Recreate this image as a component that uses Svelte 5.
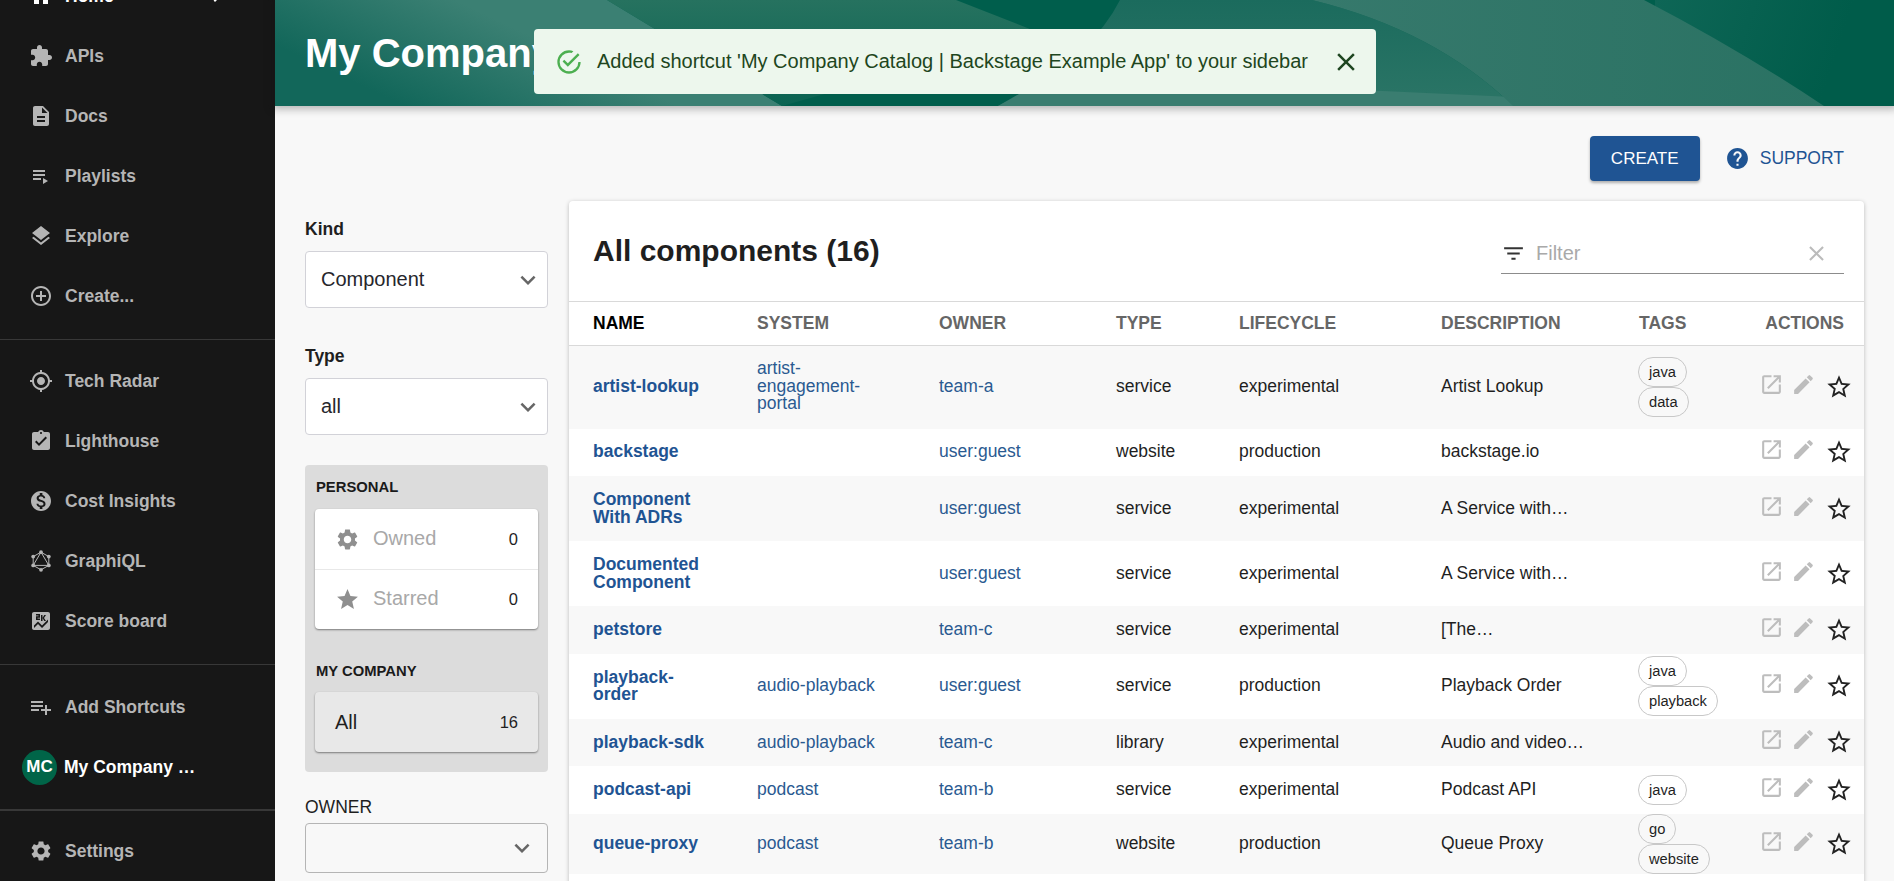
<script>
	const icons = {
		home: 'M10 20v-6h4v6h5v-8h3L12 3 2 12h3v8z',
		chevronRight: 'M10 6 8.59 7.41 13.17 12l-4.58 4.59L10 18l6-6z',
		extension: 'M20.5 11H19V7c0-1.1-.9-2-2-2h-4V3.5C13 2.12 11.88 1 10.5 1S8 2.12 8 3.5V5H4c-1.1 0-1.99.9-1.99 2v3.8H3.5c1.49 0 2.7 1.21 2.7 2.7s-1.21 2.7-2.7 2.7H2V20c0 1.1.9 2 2 2h3.8v-1.5c0-1.49 1.21-2.7 2.7-2.7 1.49 0 2.7 1.21 2.7 2.7V22H17c1.1 0 2-.9 2-2v-4h1.5c1.38 0 2.5-1.12 2.5-2.5S21.88 11 20.5 11z',
		description: 'M14 2H6c-1.1 0-1.99.9-1.99 2L4 20c0 1.1.89 2 1.99 2H18c1.1 0 2-.9 2-2V8l-6-6zm2 16H8v-2h8v2zm0-4H8v-2h8v2zm-3-5V3.5L18.5 9H13z',
		playlist: 'M4 10h12v2H4zm0-4h12v2H4zm0 8h8v2H4zm10 0v6l5-3z',
		layers: 'M11.99 18.54l-7.37-5.73L3 14.07l9 7 9-7-1.63-1.27-7.38 5.74zM12 16l7.36-5.73L21 9l-9-7-9 7 1.63 1.27L12 16z',
		addCircle: 'M13 7h-2v4H7v2h4v4h2v-4h4v-2h-4V7zm-1-5C6.48 2 2 6.48 2 12s4.48 10 10 10 10-4.48 10-10S17.52 2 12 2zm0 18c-4.41 0-8-3.59-8-8s3.59-8 8-8 8 3.59 8 8-3.59 8-8 8z',
		radar: 'M12 8c-2.21 0-4 1.79-4 4s1.79 4 4 4 4-1.79 4-4-1.79-4-4-4zm8.94 3c-.46-4.17-3.77-7.48-7.94-7.94V1h-2v2.06C6.83 3.52 3.52 6.83 3.06 11H1v2h2.06c.46 4.17 3.77 7.48 7.94 7.94V23h2v-2.06c4.17-.46 7.48-3.77 7.94-7.94H23v-2h-2.06zM12 19c-3.87 0-7-3.13-7-7s3.13-7 7-7 7 3.13 7 7-3.13 7-7 7z',
		assignment: 'M19 3h-4.18C14.4 1.84 13.3 1 12 1c-1.3 0-2.4.84-2.82 2H5c-1.1 0-2 .9-2 2v14c0 1.1.9 2 2 2h14c1.1 0 2-.9 2-2V5c0-1.1-.9-2-2-2zm-7 0c.55 0 1 .45 1 1s-.45 1-1 1-1-.45-1-1 .45-1 1-1zm-2 14l-4-4 1.41-1.41L10 14.17l6.59-6.59L18 9l-8 8z',
		money: 'M12 2C6.48 2 2 6.48 2 12s4.48 10 10 10 10-4.48 10-10S17.52 2 12 2zm1.41 16.09V20h-2.67v-1.93c-1.71-.36-3.16-1.46-3.27-3.4h1.96c.1 1.05.82 1.87 2.65 1.87 1.96 0 2.4-.98 2.4-1.59 0-.83-.44-1.61-2.67-2.14-2.48-.6-4.18-1.62-4.18-3.67 0-1.72 1.39-2.84 3.11-3.21V4h2.67v1.95c1.86.45 2.79 1.86 2.85 3.39H14.3c-.05-1.11-.64-1.87-2.22-1.87-1.5 0-2.4.68-2.4 1.64 0 .84.65 1.39 2.67 1.91s4.18 1.39 4.18 3.91c-.01 1.83-1.38 2.83-3.12 3.16z',
		score: 'M19 3H5c-1.1 0-2 .9-2 2v14c0 1.1.9 2 2 2h14c1.1 0 2-.9 2-2V5c0-1.1-.9-2-2-2zM12 6h1.5v3l1.75-3H17l-2 3 2 3h-1.75l-1.75-3v3H12V6zM7 7.25h2.5V6.5H7V5h4v3.75H8.5v.75H11V11H7V7.25zM19 13l-6 6-4-4-4 4v-2.5l4-4 4 4 6-6V13z',
		playlistAdd: 'M14 10H2v2h12v-2zm0-4H2v2h12V6zm4 8v-4h-2v4h-4v2h4v4h2v-4h4v-2h-4zM2 16h8v-2H2v2z',
		settings: 'M19.14 12.94c.04-.3.06-.61.06-.94 0-.32-.02-.64-.07-.94l2.03-1.58c.18-.14.23-.41.12-.61l-1.92-3.32c-.12-.22-.37-.29-.59-.22l-2.39.96c-.5-.38-1.03-.7-1.62-.94l-.36-2.54c-.04-.24-.24-.41-.48-.41h-3.84c-.24 0-.43.17-.47.41l-.36 2.54c-.59.24-1.13.57-1.62.94l-2.39-.96c-.22-.08-.47 0-.59.22L2.74 8.87c-.12.21-.08.47.12.61l2.03 1.58c-.05.3-.09.63-.09.94s.02.64.07.94l-2.03 1.58c-.18.14-.23.41-.12.61l1.92 3.32c.12.22.37.29.59.22l2.39-.96c.5.38 1.03.7 1.62.94l.36 2.54c.05.24.24.41.48.41h3.84c.24 0 .44-.17.47-.41l.36-2.54c.59-.24 1.13-.56 1.62-.94l2.39.96c.22.08.47 0 .59-.22l1.92-3.32c.12-.22.07-.47-.12-.61l-2.01-1.58zM12 15.6c-1.98 0-3.6-1.62-3.6-3.6s1.62-3.6 3.6-3.6 3.6 1.62 3.6 3.6-1.62 3.6-3.6 3.6z',
		star: 'M12 17.27 18.18 21l-1.64-7.03L22 9.24l-7.19-.61L12 2 9.19 8.63 2 9.24l5.46 4.73L5.82 21z',
		starBorder: 'M22 9.24l-7.19-.62L12 2 9.19 8.63 2 9.24l5.46 4.73L5.82 21 12 17.27 18.18 21l-1.63-7.03L22 9.24zM12 15.4l-3.76 2.27 1-4.28-3.32-2.88 4.38-.38L12 6.1l1.71 4.04 4.38.38-3.32 2.88 1 4.28L12 15.4z',
		open: 'M19 19H5V5h7V3H5c-1.11 0-2 .9-2 2v14c0 1.1.89 2 2 2h14c1.1 0 2-.9 2-2v-7h-2v7zM14 3v2h3.59l-9.83 9.83 1.41 1.41L19 6.41V10h2V3h-7z',
		edit: 'M3 17.25V21h3.75L17.81 9.94l-3.75-3.75L3 17.25zM20.71 7.04c.39-.39.39-1.02 0-1.41l-2.34-2.34a.9959.9959 0 0 0-1.41 0l-1.83 1.83 3.75 3.75 1.83-1.83z',
		help: 'M12 2C6.48 2 2 6.48 2 12s4.48 10 10 10 10-4.48 10-10S17.52 2 12 2zm1 17h-2v-2h2v2zm2.07-7.75l-.9.92C13.45 12.9 13 13.5 13 15h-2v-.5c0-1.1.45-2.1 1.17-2.83l1.24-1.26c.37-.36.59-.86.59-1.41 0-1.1-.9-2-2-2s-2 .9-2 2H8c0-2.21 1.79-4 4-4s4 1.79 4 4c0 .88-.36 1.68-.93 2.25z',
		filter: 'M10 18h4v-2h-4v2zM3 6v2h18V6H3zm3 7h12v-2H6v2z',
		clear: 'M19 6.41 17.59 5 12 10.59 6.41 5 5 6.41 10.59 12 5 17.59 6.41 19 12 13.41 17.59 19 19 17.59 13.41 12z',
		expand: 'M16.59 8.59 12 13.17 7.41 8.59 6 10l6 6 6-6z',
		success: 'M20 12a8 8 0 0 1-8 8 8 8 0 0 1-8-8 8 8 0 0 1 8-8c.76 0 1.5.11 2.2.31l1.57-1.57A9.9 9.9 0 0 0 12 2 10 10 0 0 0 2 12a10 10 0 0 0 10 10 10 10 0 0 0 10-10M7.91 10.08 6.5 11.5 11 16 21 6l-1.41-1.42L11 13.17l-3.09-3.09z'
	};

	const navTop = [
		{ icon: 'extension', label: 'APIs' },
		{ icon: 'description', label: 'Docs' },
		{ icon: 'playlist', label: 'Playlists' },
		{ icon: 'layers', label: 'Explore' },
		{ icon: 'addCircle', label: 'Create...' }
	];
	const navMid = [
		{ icon: 'radar', label: 'Tech Radar' },
		{ icon: 'assignment', label: 'Lighthouse' },
		{ icon: 'money', label: 'Cost Insights' },
		{ icon: 'graphiql', label: 'GraphiQL' },
		{ icon: 'score', label: 'Score board' }
	];

	const columns = ['Name', 'System', 'Owner', 'Type', 'Lifecycle', 'Description', 'Tags'];

	const rows = [
		{ name: 'artist-lookup', system: 'artist-engagement-portal', owner: 'team-a', type: 'service', lifecycle: 'experimental', description: 'Artist Lookup', tags: ['java', 'data'] },
		{ name: 'backstage', system: '', owner: 'user:guest', type: 'website', lifecycle: 'production', description: 'backstage.io', tags: [] },
		{ name: 'Component With ADRs', system: '', owner: 'user:guest', type: 'service', lifecycle: 'experimental', description: 'A Service with…', tags: [] },
		{ name: 'Documented Component', system: '', owner: 'user:guest', type: 'service', lifecycle: 'experimental', description: 'A Service with…', tags: [] },
		{ name: 'petstore', system: '', owner: 'team-c', type: 'service', lifecycle: 'experimental', description: '[The…', tags: [] },
		{ name: 'playback-order', system: 'audio-playback', owner: 'user:guest', type: 'service', lifecycle: 'production', description: 'Playback Order', tags: ['java', 'playback'] },
		{ name: 'playback-sdk', system: 'audio-playback', owner: 'team-c', type: 'library', lifecycle: 'experimental', description: 'Audio and video…', tags: [] },
		{ name: 'podcast-api', system: 'podcast', owner: 'team-b', type: 'service', lifecycle: 'experimental', description: 'Podcast API', tags: ['java'] },
		{ name: 'queue-proxy', system: 'podcast', owner: 'team-b', type: 'website', lifecycle: 'production', description: 'Queue Proxy', tags: ['go', 'website'] }
	];
</script>

{#snippet icon(name, cls = '')}
	{#if name === 'graphiql'}
		<svg class="icon {cls}" viewBox="0 0 24 24" aria-hidden="true">
			<polygon points="12,3.2 19.8,7.6 19.8,16.4 12,20.8 4.2,16.4 4.2,7.6" fill="none" stroke="currentColor" stroke-width="1" />
			<polygon points="12,3.2 19.8,16.4 4.2,16.4" fill="none" stroke="currentColor" stroke-width="1" />
			<circle cx="12" cy="3.2" r="1.9" />
			<circle cx="19.8" cy="7.6" r="1.9" />
			<circle cx="19.8" cy="16.4" r="1.9" />
			<circle cx="12" cy="20.8" r="1.9" />
			<circle cx="4.2" cy="16.4" r="1.9" />
			<circle cx="4.2" cy="7.6" r="1.9" />
		</svg>
	{:else}
		<svg class="icon {cls}" viewBox="0 0 24 24" aria-hidden="true"><path d={icons[name]} /></svg>
	{/if}
{/snippet}

{#snippet navItem(item)}
	<div class="nav-item">
		{@render icon(item.icon)}
		<span>{item.label}</span>
	</div>
{/snippet}

<div class="page">
	<nav class="sidebar">
		<div class="nav-group">
			<div class="nav-item home">
				{@render icon('home')}
				<span>Home</span>
				{@render icon('chevronRight', 'home-arrow')}
			</div>
			{#each navTop as item}
				{@render navItem(item)}
			{/each}
		</div>
		<hr />
		<div class="nav-group">
			{#each navMid as item}
				{@render navItem(item)}
			{/each}
		</div>
		<hr />
		<div class="nav-group shortcuts">
			{@render navItem({ icon: 'playlistAdd', label: 'Add Shortcuts' })}
			<div class="nav-item shortcut">
				<div class="avatar">MC</div>
				<span class="shortcut-label">My Company Catalog</span>
			</div>
		</div>
		<hr class="thick" />
		<div class="nav-group settings">
			{@render navItem({ icon: 'settings', label: 'Settings' })}
		</div>
	</nav>

	<main class="main">
		<header class="banner">
			<svg class="waves" viewBox="0 0 1619 106" preserveAspectRatio="none" aria-hidden="true">
				<defs>
					<linearGradient id="waveLeft" gradientUnits="userSpaceOnUse" x1="130" y1="106" x2="180" y2="0">
						<stop offset="0" stop-color="#12675a" />
						<stop offset="1" stop-color="#3b8073" />
					</linearGradient>
					<linearGradient id="waveMid" x1="0" y1="0" x2="0" y2="1">
						<stop offset="0" stop-color="#26725f" />
						<stop offset="1" stop-color="#0a6352" />
					</linearGradient>
					<linearGradient id="waveRight" x1="0" y1="0" x2="0" y2="1">
						<stop offset="0" stop-color="#1b6b5d" />
						<stop offset="1" stop-color="#2b7566" />
					</linearGradient>
					<linearGradient id="waveLight" x1="0" y1="0" x2="1" y2="0">
						<stop offset="0" stop-color="#36796c" />
						<stop offset="1" stop-color="#2a7263" />
					</linearGradient>
					<linearGradient id="waveDark" gradientUnits="userSpaceOnUse" x1="1380" y1="0" x2="1560" y2="60">
						<stop offset="0" stop-color="#0e6656" />
						<stop offset="1" stop-color="#005c4a" />
					</linearGradient>
				</defs>
				<rect width="1619" height="106" fill="url(#waveDark)" />
				<rect x="480" width="900" height="106" fill="#005e4c" />
				<path d="M0 0H332L507 106H0Z" fill="url(#waveLeft)" />
				<path d="M332 0H681L765 33L507 106Z" fill="url(#waveMid)" />
				<path d="M845 0Q815 60 723 106H1238Q1160 30 1037 0Z" fill="url(#waveRight)" />
				<path d="M723 106L744 94L1065 89L1238 97V106Z" fill="#3a7d70" />
				<path d="M1037 0Q1160 30 1238 106H1549Q1465 50 1369 0Z" fill="url(#waveLight)" />
			</svg>
			<h1>My Company Catalog</h1>
		</header>

		<div class="toast">
			{@render icon('success', 'toast-icon')}
			<span>Added shortcut 'My Company Catalog | Backstage Example App' to your sidebar</span>
			{@render icon('clear', 'toast-close')}
		</div>

		<div class="toolbar">
			<button class="create">CREATE</button>
			<div class="support">
				{@render icon('help', 'support-icon')}
				<span>SUPPORT</span>
			</div>
		</div>

		<div class="content">
			<aside class="filters">
				<div class="field-label first">Kind</div>
				<div class="select">
					<span>Component</span>
					{@render icon('expand', 'chevron')}
				</div>
				<div class="field-label">Type</div>
				<div class="select">
					<span>all</span>
					{@render icon('expand', 'chevron')}
				</div>

				<div class="picker">
					<div class="picker-title">PERSONAL</div>
					<div class="picker-card">
						<div class="picker-row muted">
							{@render icon('settings', 'picker-icon')}
							<span class="picker-name">Owned</span>
							<span class="picker-count">0</span>
						</div>
						<div class="picker-row muted">
							{@render icon('star', 'picker-icon')}
							<span class="picker-name">Starred</span>
							<span class="picker-count">0</span>
						</div>
					</div>
					<div class="picker-title second">MY COMPANY</div>
					<div class="picker-card active">
						<div class="picker-row">
							<span class="picker-name">All</span>
							<span class="picker-count">16</span>
						</div>
					</div>
				</div>

				<div class="owner-label">OWNER</div>
				<div class="select owner">
					{@render icon('expand', 'chevron')}
				</div>
			</aside>

			<section class="card">
				<div class="card-head">
					<h2>All components (16)</h2>
					<div class="search">
						{@render icon('filter', 'search-icon')}
						<span class="placeholder">Filter</span>
						{@render icon('clear', 'search-clear')}
					</div>
				</div>
				<table>
					<colgroup>
						<col style="width: 164px" />
						<col style="width: 182px" />
						<col style="width: 177px" />
						<col style="width: 123px" />
						<col style="width: 202px" />
						<col style="width: 198px" />
						<col style="width: 126px" />
						<col style="width: 123px" />
					</colgroup>
					<thead>
						<tr>
							{#each columns as col, i}
								<th class:sorted={i === 0}>{col}</th>
							{/each}
							<th class="actions-head">Actions</th>
						</tr>
					</thead>
					<tbody>
						{#each rows as row}
							<tr>
								<td class="name">{row.name}</td>
								<td class="link system">{row.system}</td>
								<td class="link">{row.owner}</td>
								<td>{row.type}</td>
								<td>{row.lifecycle}</td>
								<td>{row.description}</td>
								<td class="tags">
									{#each row.tags as tag}
										<div class="chip">{tag}</div>
									{/each}
								</td>
								<td class="actions">
									<div class="action-icons">
										{@render icon('open', 'action')}
										{@render icon('edit', 'action')}
										{@render icon('starBorder', 'action-star')}
									</div>
								</td>
							</tr>
						{/each}
						<tr class="filler"><td colspan="8"></td></tr>
					</tbody>
				</table>
			</section>
		</div>
	</main>
</div>

<style>
	:global(body) {
		margin: 0;
		background: #f8f8f8;
		font-family: "Liberation Sans", Arial, sans-serif;
	}

	.page {
		display: flex;
		position: relative;
		width: 1894px;
		height: 881px;
		overflow: hidden;
		font-size: 17.5px;
		color: #1f1f1f;
	}

	.icon {
		display: block;
		flex: none;
		width: 24px;
		height: 24px;
		fill: currentColor;
	}

	/* sidebar */
	.sidebar {
		flex: none;
		width: 275px;
		height: 881px;
		background: #171717;
		color: #b5b5b5;
		font-weight: 700;
	}

	.sidebar hr {
		margin: 0;
		border: none;
		border-top: 1px solid #383838;
	}

	.sidebar hr.thick {
		border-top-width: 2px;
	}

	.nav-group {
		margin: 11px 0 13px;
	}

	.nav-group:first-child {
		margin-top: -34px;
	}

	.nav-group.shortcuts {
		margin: 12px 0 12px;
	}

	.nav-group.settings {
		margin-top: 10px;
	}

	.nav-item {
		display: flex;
		position: relative;
		align-items: center;
		gap: 12px;
		height: 60px;
		padding-left: 29px;
	}

	.nav-item.home {
		color: #fff;
	}

	.sidebar :global(.home-arrow) {
		position: absolute;
		left: 205px;
		top: 18px;
	}

	.nav-item.shortcut {
		gap: 7px;
		padding-left: 22px;
		color: #fff;
	}

	.avatar {
		display: flex;
		flex: none;
		align-items: center;
		justify-content: center;
		width: 35px;
		height: 35px;
		border-radius: 50%;
		background: #006548;
		color: #fff;
		font-size: 17px;
	}

	.shortcut-label {
		width: 132px;
		overflow: hidden;
		white-space: nowrap;
		text-overflow: ellipsis;
	}

	/* banner */
	.main {
		flex: 1;
		min-width: 0;
	}

	.banner {
		display: flex;
		position: relative;
		align-items: center;
		height: 106px;
		padding-left: 30px;
		box-sizing: border-box;
		box-shadow: 0 0 8px 3px rgba(20, 20, 20, 0.3);
		color: #fff;
	}

	.waves {
		position: absolute;
		inset: 0;
		width: 100%;
		height: 100%;
	}

	.banner h1 {
		position: relative;
		margin: 0;
		font-size: 40px;
		line-height: 46px;
		white-space: nowrap;
	}

	.toast {
		display: flex;
		position: absolute;
		left: 534px;
		top: 29px;
		align-items: center;
		gap: 14px;
		box-sizing: border-box;
		width: 842px;
		height: 65px;
		padding: 0 15px 0 21px;
		border-radius: 4px;
		background: #edf7ed;
		color: #1e4620;
		font-size: 20px;
	}

	.toast :global(.toast-icon) {
		width: 28px;
		height: 28px;
		color: #4caf50;
	}

	.toast :global(.toast-close) {
		margin-left: auto;
		width: 30px;
		height: 30px;
		color: #1e4620;
	}

	/* toolbar */
	.toolbar {
		display: flex;
		align-items: center;
		justify-content: flex-end;
		gap: 25px;
		padding: 30px 50px 0 0;
	}

	.create {
		width: 110px;
		height: 45px;
		border: none;
		border-radius: 4px;
		background: #1f5493;
		box-shadow: 0 2px 3px rgba(0, 0, 0, 0.3);
		color: #fff;
		font: inherit;
		font-size: 17px;
	}

	.support {
		display: flex;
		align-items: center;
		gap: 10px;
		color: #1f5493;
		font-size: 17.5px;
	}

	.support :global(.support-icon) {
		width: 25px;
		height: 25px;
	}

	/* filters */
	.content {
		display: flex;
		gap: 21px;
		padding: 20px 30px 0;
	}

	.filters {
		flex: none;
		width: 243px;
		padding-top: 18px;
	}

	.field-label {
		margin: 38px 0 12px;
		font-weight: 700;
		line-height: 20px;
	}

	.field-label.first {
		margin-top: 0;
	}

	.select {
		display: flex;
		align-items: center;
		justify-content: space-between;
		box-sizing: border-box;
		height: 57px;
		padding: 0 4px 0 15px;
		border: 1px solid #d2d2d8;
		border-radius: 4px;
		background: #fff;
		color: #26262c;
		font-size: 20px;
	}

	.select :global(.chevron) {
		width: 30px;
		height: 30px;
		color: #666;
	}

	.select.owner {
		justify-content: flex-end;
		height: 50px;
		padding-right: 10px;
		border-color: #b5b5b5;
		background: transparent;
	}

	.picker {
		margin-top: 30px;
		padding: 14px 10px 20px;
		border-radius: 4px;
		background: #dcdcdc;
	}

	.picker-title {
		margin: 0 0 14px 1px;
		color: #1a1a1a;
		font-size: 14.8px;
		font-weight: 700;
		line-height: 16px;
	}

	.picker-title.second {
		margin: 34px 0 13px 1px;
	}

	.picker-card {
		border-radius: 4px;
		background: #fff;
		box-shadow: 0 1px 2px rgba(0, 0, 0, 0.45);
	}

	.picker-card.active {
		background: #e8e8e8;
	}

	.picker-row {
		display: flex;
		align-items: center;
		gap: 13px;
		box-sizing: border-box;
		height: 60px;
		padding: 0 20px;
		font-size: 20px;
	}

	.picker-row + .picker-row {
		border-top: 1px solid #e8e8e8;
	}

	.picker-row.muted {
		color: #a8a8a8;
	}

	.picker-row.muted .picker-name {
		padding-bottom: 2px;
	}

	.picker-row :global(.picker-icon) {
		width: 25px;
		height: 25px;
		color: #8f8f8f;
	}

	.picker-count {
		margin-left: auto;
		color: #1f1f1f;
		font-size: 16.5px;
	}

	.owner-label {
		margin: 25px 0 6px;
		line-height: 20px;
	}

	/* table card */
	.card {
		flex: 1;
		min-width: 0;
		border-radius: 4px;
		background: #fff;
		box-shadow: 0 1px 4px rgba(0, 0, 0, 0.25);
	}

	.card-head {
		display: flex;
		justify-content: space-between;
		box-sizing: border-box;
		height: 100px;
		padding: 33px 20px 0 24px;
	}

	.card-head h2 {
		margin: 0;
		font-size: 30px;
		line-height: 34px;
	}

	.search {
		display: flex;
		align-items: center;
		gap: 10px;
		box-sizing: border-box;
		width: 343px;
		height: 40px;
		padding: 0 15px 0 0;
		border-bottom: 1px solid #8c8c8c;
	}

	.search :global(.search-icon) {
		width: 25px;
		height: 25px;
		margin-left: 0;
		color: #333;
	}

	.search :global(.search-clear) {
		width: 25px;
		height: 25px;
		margin-left: auto;
		color: #bbb;
	}

	.placeholder {
		color: #a9a9a9;
		font-size: 20px;
	}

	table {
		width: 100%;
		border-collapse: collapse;
		table-layout: fixed;
		line-height: 17.5px;
	}

	th {
		box-sizing: border-box;
		height: 44px;
		padding: 0 0 0 24px;
		border-top: 1px solid #d9d9d9;
		border-bottom: 1px solid #d9d9d9;
		color: #666;
		font-weight: 700;
		text-align: left;
		text-transform: uppercase;
	}

	th.sorted {
		color: #000;
	}

	th.actions-head {
		padding: 0 20px 0 0;
		text-align: right;
	}

	td {
		padding: 15px 24px;
		vertical-align: middle;
	}

	tbody tr:nth-child(-n + 2) td:not(.tags, .actions) {
		padding-top: 14px;
		padding-bottom: 16px;
	}

	tbody tr:nth-child(odd) {
		background: #f8f8f8;
	}

	tr.filler,
	tr.filler td {
		height: 200px;
		background: #fff;
	}

	td.name {
		padding-right: 28px;
		color: #1f5493;
		font-weight: 700;
	}

	.link {
		color: #2a5a91;
	}

	td.system {
		padding-right: 28px;
	}

	td.tags {
		padding: 0 0 0 23px;
	}

	.chip {
		box-sizing: border-box;
		width: fit-content;
		height: 30px;
		padding: 0 10px;
		border: 1px solid #c8c8c8;
		border-radius: 15px;
		font-size: 14.7px;
		line-height: 28px;
	}

	td.actions {
		padding: 0 0 0 18px;
	}

	.action-icons {
		display: flex;
		align-items: center;
	}

	.action-icons :global(.action) {
		width: 25px;
		height: 25px;
		margin: 0 7px 5px 0;
		color: #bdbdbd;
	}

	.action-icons :global(.action:nth-child(2)) {
		margin-right: 9px;
	}

	.action-icons :global(.action-star) {
		width: 28px;
		height: 28px;
		color: #222;
	}
</style>
